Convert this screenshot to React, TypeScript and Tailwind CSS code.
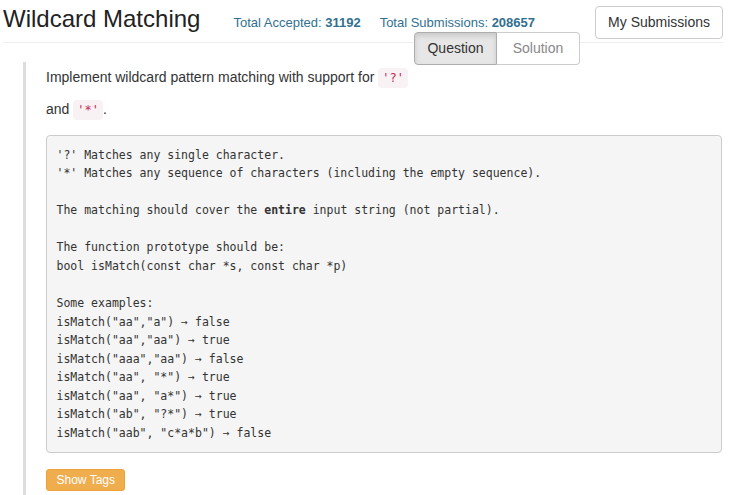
import React from 'react';

const mono = "font-['DejaVu_Sans_Mono',monospace]";

function InlineCode({ children }: { children: React.ReactNode }) {
  return (
    <code className={`${mono} text-[12px] text-[#c7254e] bg-[#f9f2f4] rounded px-[4px] py-[3px]`}>
      {children}
    </code>
  );
}

const lines: React.ReactNode[] = [
  "'?' Matches any single character.",
  "'*' Matches any sequence of characters (including the empty sequence).",
  '',
  <>
    The matching should cover the <b>entire</b> input string (not partial).
  </>,
  '',
  'The function prototype should be:',
  'bool isMatch(const char *s, const char *p)',
  '',
  'Some examples:',
  'isMatch("aa","a") → false',
  'isMatch("aa","aa") → true',
  'isMatch("aaa","aa") → false',
  'isMatch("aa", "*") → true',
  'isMatch("aa", "a*") → true',
  'isMatch("ab", "?*") → true',
  'isMatch("aab", "c*a*b") → false',
];

export default function App() {
  return (
    <div className="w-[739px] h-[495px] overflow-hidden bg-white font-['Liberation_Sans',Arial,sans-serif] text-[#333]">
      <div className="relative">
        <div className="ml-[3px] mr-[16px] h-[43px] flex items-start border-b border-[#eee]">
          <h3 className="text-[24px] leading-[24px] mt-[7px] text-[#222]">Wildcard Matching</h3>
          <div className="ml-[33px] mt-[13px] text-[13px] text-[#31708f] flex gap-[19px]">
            <span>
              Total Accepted: <b>31192</b>
            </span>
            <span>
              Total Submissions: <b>208657</b>
            </span>
          </div>
          <button className="ml-auto mt-[6px] h-[33px] px-[12px] text-[14px] text-[#333] bg-white border border-[#ccc] rounded-[4px]">
            My Submissions
          </button>
        </div>
        <div className="absolute left-[414px] top-[32px] flex">
          <button className="w-[83px] h-[33px] text-[14px] text-[#333] bg-[#e6e6e6] border border-[#adadad] rounded-l-[4px] shadow-[inset_0_3px_5px_rgba(0,0,0,0.125)]">
            Question
          </button>
          <button className="w-[83px] h-[33px] text-[14px] text-[#888] bg-white border border-l-0 border-[#ccc] rounded-r-[4px]">
            Solution
          </button>
        </div>
      </div>

      <div className="mt-[19px] ml-[23px] border-l-[3px] border-[#ddd] pl-[20px] pb-[20px]">
        <p className="w-[376px] text-[14px] leading-[31px]">
          Implement wildcard pattern matching with support for <InlineCode>'?'</InlineCode> and{' '}
          <InlineCode>'*'</InlineCode>.
        </p>
        <pre
          className={`${mono} mt-[9px] w-[676px] text-[11.5px] leading-[18.57px] text-[#333] bg-[#f5f5f5] border border-[#ccc] rounded-[4px] p-[9.5px] whitespace-pre`}
        >
          {lines.map((l, i) => (
            <div key={i} className="h-[18.57px]">
              {l}
            </div>
          ))}
        </pre>
        <button className="mt-[16px] h-[22px] px-[9.5px] text-[12px] text-white bg-[#f0ad4e] border border-[#eea236] rounded-[3px]">
          Show Tags
        </button>
      </div>
    </div>
  );
}
